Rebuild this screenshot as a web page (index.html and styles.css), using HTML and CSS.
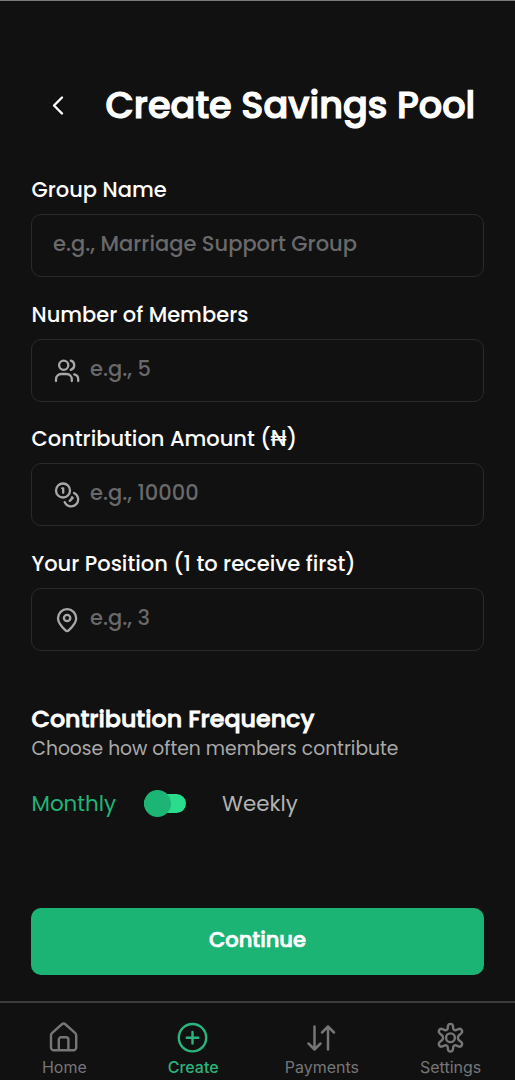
FILE: index.html
```html
<!DOCTYPE html>
<html lang="en">
<head>
<meta charset="utf-8">
<title>Create Savings Pool</title>
<link rel="stylesheet" href="styles.css">
</head>
<body>
<main class="screen">
  <header class="header">
    <svg class="back" viewBox="0 0 14 22" fill="none" stroke="currentColor" stroke-width="2.4" stroke-linecap="round" stroke-linejoin="round"><path d="M11 3.500 3 11.500l8 8"/></svg>
    <h1 class="title">Create Savings Pool</h1>
  </header>
  <form class="form">
    <div class="field">
      <span class="label">Group Name</span>
      <div class="input"><span class="hint">e.g., Marriage Support Group</span></div>
    </div>
    <div class="field">
      <span class="label">Number of Members</span>
      <div class="input">
        <svg class="icon" viewBox="0 0 26 26" fill="none" stroke="currentColor" stroke-width="2.3" stroke-linecap="round"><circle cx="9.7" cy="7.2" r="4.6"/><path d="M2 23v-1.8a5.2 5.2 0 0 1 5.2-5.2h5.4a5.2 5.2 0 0 1 5.2 5.2V23M16.8 2.6a4.8 4.8 0 0 1 0 9.2M20.2 16.3a5 5 0 0 1 4 4.9V23"/></svg>
        <span class="hint">e.g., 5</span>
      </div>
    </div>
    <div class="field">
      <span class="label">Contribution Amount (₦)</span>
      <div class="input">
        <svg class="icon" viewBox="0 0 26 26" fill="none" stroke="currentColor" stroke-width="2.3" stroke-linecap="round" stroke-linejoin="round"><circle cx="9" cy="8.5" r="7"/><path d="M8.2 6.3h1v4.5M20 11a7 7 0 1 1-9.3 9.1M18 15.3l.6.6-2.8 3"/></svg>
        <span class="hint">e.g., 10000</span>
      </div>
    </div>
    <div class="field">
      <span class="label">Your Position (1 to receive first)</span>
      <div class="input">
        <svg class="icon" viewBox="0 0 26 26" fill="none" stroke="currentColor" stroke-width="2.3" stroke-linejoin="round"><path d="M22.2 11.3c0 4.8-4.7 9.5-7.5 12a2.3 2.3 0 0 1-3.2 0C8.7 20.8 4 16.1 4 11.3a9.1 9.1 0 0 1 18.2 0Z"/><circle cx="13.1" cy="11" r="3.2"/></svg>
        <span class="hint">e.g., 3</span>
      </div>
    </div>
  </form>
  <section class="frequency">
    <h2 class="subtitle">Contribution Frequency</h2>
    <p class="note">Choose how often members contribute</p>
    <div class="options">
      <span class="monthly">Monthly</span>
      <span class="switch"><span class="thumb"></span></span>
      <span class="weekly">Weekly</span>
    </div>
  </section>
  <button class="continue" type="button">Continue</button>
  <nav class="nav">
    <a class="tab"><svg class="tab-icon" viewBox="0 0 32 32" fill="none" stroke="currentColor" stroke-width="2.4" stroke-linejoin="round" stroke-linecap="round"><path d="M3 13.300c0-1 .4-1.800 1.200-2.500l9.400-8.300a3 3 0 0 1 4 0l9.400 8.300c.8.700 1.200 1.500 1.200 2.500v12.200a2.800 2.800 0 0 1-2.800 2.800H5.800a2.800 2.800 0 0 1-2.800-2.800V13.300ZM10.800 28.300V17.600a2.300 2.300 0 0 1 2.300-2.300h5a2.300 2.300 0 0 1 2.300 2.300v10.700"/></svg><span>Home</span></a>
    <a class="tab active"><svg class="tab-icon" viewBox="0 0 32 32" fill="none" stroke="currentColor" stroke-width="2.4" stroke-linecap="round"><circle cx="15.5" cy="15.7" r="13.7"/><path d="M9.7 15.7h11.6M15.5 9.9v11.6"/></svg><span>Create</span></a>
    <a class="tab"><svg class="tab-icon" viewBox="0 0 32 32" fill="none" stroke="currentColor" stroke-width="2.5" stroke-linecap="round" stroke-linejoin="round"><path d="M8.500 4.500V27M2.500 21.500l6 6 6-6M22 27.500V4.500M16 10.500l6-6 6 6"/></svg><span>Payments</span></a>
    <a class="tab"><svg class="tab-icon" viewBox="0 0 24 24" fill="none" stroke="currentColor" stroke-width="1.8" stroke-linecap="round" stroke-linejoin="round"><path d="M9.7 3.2C10 .8 13.2.8 13.5 3.2L13.7 5C13.8 5.800 14.900 6.400 15.700 6.100L17.600 5.300C19.800 4.400 21.300 7.200 19.500 8.700L18 9.900C16.900 10.800 16.900 12.800 18 13.700L19.500 14.900C21.300 16.400 19.800 19.200 17.600 18.300L15.700 17.500C14.900 17.200 13.800 17.800 13.700 18.600L13.500 20.400C13.200 22.800 10 22.800 9.700 20.400L9.500 18.600C9.400 17.800 8.300 17.200 7.500 17.500L5.600 18.300C3.400 19.200 1.900 16.400 3.700 14.900L5.200 13.700C6.300 12.800 6.300 10.800 5.200 9.900L3.700 8.700C1.900 7.200 3.400 4.400 5.600 5.300L7.500 6.100C8.300 6.400 9.400 5.800 9.500 5Z"/><circle cx="11.6" cy="11.8" r="3.3"/></svg><span>Settings</span></a>
  </nav>
</main>
</body>
</html>
```
FILE: styles.css
```css
* { box-sizing: border-box; }
body { margin: 0; background: #111; }
.screen {
  display: flex;
  flex-direction: column;
  height: 1080px;
  overflow: hidden;
  border-top: 1px solid #777c79;
  color: #fff;
  font-family: Poppins, Inter, sans-serif;
  white-space: nowrap;
}
.header { display: flex; align-items: center; height: 60px; margin-top: 74px; padding-left: 51px; }
.back { width: 14px; height: 22px; }
.title { margin: 0 0 0 40.5px; font-size: 36.7px; line-height: 60px; font-weight: 500; -webkit-text-stroke: 1.2px #fff; }
.form { display: flex; flex-direction: column; gap: 24.7px; margin: 42px 31px 0; }
.field { display: flex; flex-direction: column; gap: 12px; height: 100px; }
.label { padding-left: 0.5px; font-size: 21px; line-height: 25px; font-weight: 500; }
.input {
  display: flex;
  align-items: center;
  height: 63px;
  padding: 0 21px;
  border: 1px solid #2a2a2a;
  border-radius: 10px;
}
.icon { width: 26px; height: 26px; margin: 1px 10px 0 1px; color: #a8a8a8; }
.hint { color: #69696b; font-size: 21px; line-height: 28px; padding-bottom: 3px; font-weight: 500; }
.frequency { margin: 51px 31px 0; }
.subtitle { margin: 0; padding-left: 0.5px; font-size: 23.8px; line-height: 34px; font-weight: 500; -webkit-text-stroke: 0.8px #fff; }
.note { margin: 0; padding-left: 0.5px; font-size: 18.7px; line-height: 26px; color: #aaa; }
.options { display: flex; align-items: center; height: 30px; margin-top: 26px; font-size: 21.4px; }
.monthly { width: 113px; padding-left: 0.5px; color: #20b577; }
.switch { display: flex; align-items: center; width: 42px; height: 19px; border-radius: 10px; background: #2bdc8d; }
.thumb { width: 27px; height: 27px; flex: none; border-radius: 50%; background: #1db575; }
.weekly { margin-left: 36px; color: #b2b2b2; }
.continue {
  flex: none;
  height: 67px;
  margin: 90px 31px 0;
  padding: 0 0 5px;
  border: 0;
  border-radius: 10px;
  background: #1cb475;
  color: #fff;
  font: 500 21px Poppins, Inter, sans-serif;
  -webkit-text-stroke: 0.7px #fff;
}
.nav {
  display: grid;
  grid-template-columns: repeat(4, 1fr);
  margin-top: 26px;
  border-top: 2px solid #3b3b3b;
  font-family: Inter, sans-serif;
}
.tab { display: flex; flex-direction: column; align-items: center; gap: 3px; padding-top: 19px; color: #767678; font-size: 16px; line-height: 20px; }
.tab-icon { width: 32px; height: 32px; }
.active { color: #2ab57c; font-weight: 500; }
```
